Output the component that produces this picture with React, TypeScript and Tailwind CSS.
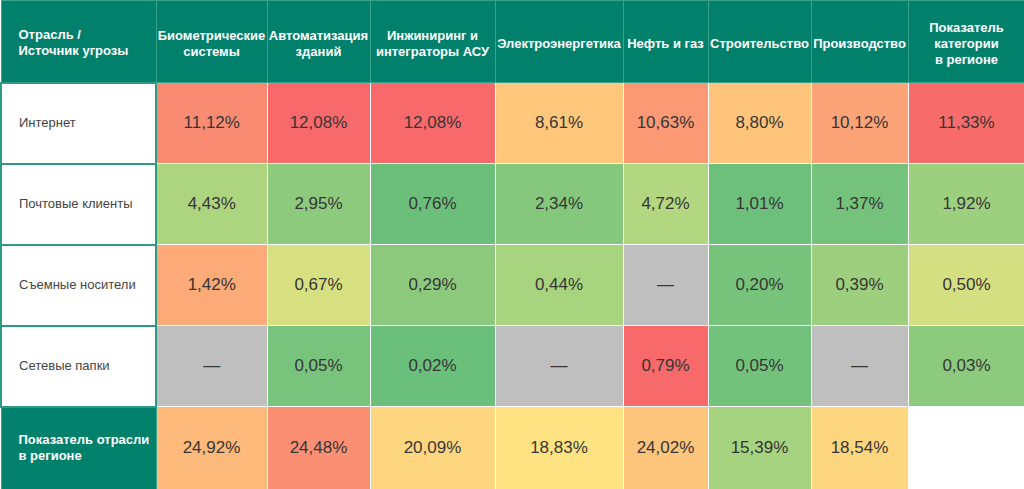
const columns = [
  { label: 'Биометрические системы', width: 'w-[111px]' },
  { label: 'Автоматизация зданий', width: 'w-[103px]' },
  { label: 'Инжиниринг и интеграторы АСУ', width: 'w-[125px]' },
  { label: 'Электроэнергетика', width: 'w-[128px]' },
  { label: 'Нефть и газ', width: 'w-[85px]' },
  { label: 'Строительство', width: 'w-[103px]' },
  { label: 'Производство', width: 'w-[97px]' },
];

type Cell = { value: string; bg: string };

const rows: { label: string; cells: Cell[] }[] = [
  {
    label: 'Интернет',
    cells: [
      { value: '11,12%', bg: 'bg-[#f98b72]' },
      { value: '12,08%', bg: 'bg-[#f8696b]' },
      { value: '12,08%', bg: 'bg-[#f8696b]' },
      { value: '8,61%', bg: 'bg-[#fec77c]' },
      { value: '10,63%', bg: 'bg-[#fb9975]' },
      { value: '8,80%', bg: 'bg-[#fec47b]' },
      { value: '10,12%', bg: 'bg-[#fca477]' },
      { value: '11,33%', bg: 'bg-[#f86b6b]' },
    ],
  },
  {
    label: 'Почтовые клиенты',
    cells: [
      { value: '4,43%', bg: 'bg-[#add57f]' },
      { value: '2,95%', bg: 'bg-[#8dca7d]' },
      { value: '0,76%', bg: 'bg-[#6bbf7b]' },
      { value: '2,34%', bg: 'bg-[#85c87d]' },
      { value: '4,72%', bg: 'bg-[#b3d780]' },
      { value: '1,01%', bg: 'bg-[#6dc07c]' },
      { value: '1,37%', bg: 'bg-[#75c27c]' },
      { value: '1,92%', bg: 'bg-[#9ccf7e]' },
    ],
  },
  {
    label: 'Съемные носители',
    cells: [
      { value: '1,42%', bg: 'bg-[#fbaa78]' },
      { value: '0,67%', bg: 'bg-[#d6e081]' },
      { value: '0,29%', bg: 'bg-[#8cc97d]' },
      { value: '0,44%', bg: 'bg-[#a8d37f]' },
      { value: '—', bg: 'bg-[#bfbfbf]' },
      { value: '0,20%', bg: 'bg-[#77c37c]' },
      { value: '0,39%', bg: 'bg-[#9dcf7e]' },
      { value: '0,50%', bg: 'bg-[#d3df81]' },
    ],
  },
  {
    label: 'Сетевые папки',
    cells: [
      { value: '—', bg: 'bg-[#bfbfbf]' },
      { value: '0,05%', bg: 'bg-[#78c47c]' },
      { value: '0,02%', bg: 'bg-[#6abf7b]' },
      { value: '—', bg: 'bg-[#bfbfbf]' },
      { value: '0,79%', bg: 'bg-[#f8696b]' },
      { value: '0,05%', bg: 'bg-[#73c27c]' },
      { value: '—', bg: 'bg-[#bfbfbf]' },
      { value: '0,03%', bg: 'bg-[#8cca7d]' },
    ],
  },
];

const totals: Cell[] = [
  { value: '24,92%', bg: 'bg-[#fdba7b]' },
  { value: '24,48%', bg: 'bg-[#fb8f74]' },
  { value: '20,09%', bg: 'bg-[#fed680]' },
  { value: '18,83%', bg: 'bg-[#ffe383]' },
  { value: '24,02%', bg: 'bg-[#fdc47c]' },
  { value: '15,39%', bg: 'bg-[#a6d37f]' },
  { value: '18,54%', bg: 'bg-[#fed680]' },
];

const headCell = 'bg-[#01806c] border border-[#3aa38c] text-white font-bold text-[13px] leading-[16px]';
const valueCell = 'border border-white text-center text-[17px] text-[#363636]';

export default function App() {
  return (
    <div className="w-[1024px] h-[489px] overflow-hidden bg-white font-['Liberation_Sans',Arial,sans-serif]">
      <table className="w-[1024px] table-fixed border-collapse">
        <thead>
          <tr className="h-[82px]">
            <th className={`${headCell} w-[155px] text-left pl-[17px] pr-2 pt-1`}>
              Отрасль /<br />Источник угрозы
            </th>
            {columns.map((c) => (
              <th key={c.label} className={`${headCell} ${c.width} text-center px-0 pt-1`}>
                {c.label}
              </th>
            ))}
            <th className={`${headCell} w-[117px] text-center px-1 pt-1`}>
              Показатель<br />категории<br />в регионе
            </th>
          </tr>
        </thead>
        <tbody>
          {rows.map((r) => (
            <tr key={r.label} className="h-[81px]">
              <td className="border-2 border-[#2f9a83] bg-white pl-[17px] text-[13px] text-[#444]">
                {r.label}
              </td>
              {r.cells.map((c, i) => (
                <td key={i} className={`${valueCell} ${c.bg}`}>
                  {c.value}
                </td>
              ))}
            </tr>
          ))}
          <tr className="h-[83px]">
            <td className={`${headCell} text-left pl-[17px] pr-1`}>
              Показатель отрасли<br />в регионе
            </td>
            {totals.map((c, i) => (
              <td key={i} className={`${valueCell} ${c.bg}`}>
                {c.value}
              </td>
            ))}
            <td className="border border-white bg-white" />
          </tr>
        </tbody>
      </table>
    </div>
  );
}
